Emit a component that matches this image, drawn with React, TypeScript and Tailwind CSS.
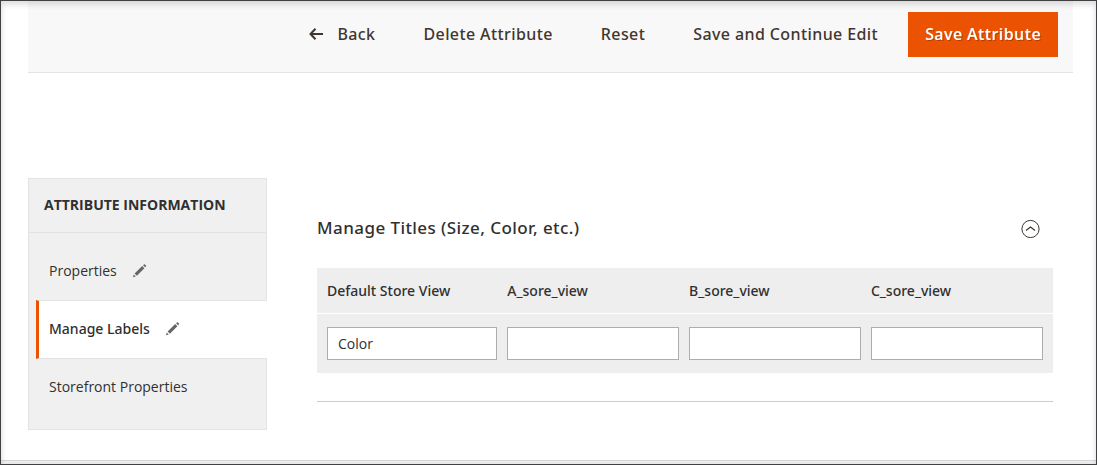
import { useState } from "react";
import clsx from "clsx";

const storeViews = [
  { id: "default", label: "Default Store View", value: "Color" },
  { id: "a", label: "A_sore_view", value: "" },
  { id: "b", label: "B_sore_view", value: "" },
  { id: "c", label: "C_sore_view", value: "" },
];

const tabs = [
  { label: "Properties", edited: true },
  { label: "Manage Labels", edited: true },
  { label: "Storefront Properties", edited: false },
];

function BackIcon() {
  return (
    <svg className="h-3 w-3.5" viewBox="0 0 14 12" fill="none" stroke="currentColor" strokeWidth="2">
      <path d="M14 6H1.5M6.5 0.8L1.5 6l5 5.2" />
    </svg>
  );
}

function PencilIcon() {
  return (
    <svg className="h-3.5 w-3.5 text-[#666]" viewBox="0 0 14 14" fill="currentColor">
      <path d="M0 13.2l.8-2.8 2 2zM1.6 9.5l7.6-7.4 2.2 2.2L3.9 11.7zM10 1.3l1-.9c.3-.3.6-.3.9 0l1.1 1c.3.3.3.6 0 .9l-.9 1z" />
    </svg>
  );
}

function CollapseIcon() {
  return (
    <svg className="h-5 w-5" viewBox="0 0 20 20" fill="none" stroke="#41362f">
      <circle cx="9.5" cy="11" r="8.6" strokeWidth="1" />
      <path d="M5 12.5L9.5 9l4.5 3.5" strokeWidth="1.2" />
    </svg>
  );
}

function PageActions() {
  return (
    <header className="mr-[23px] ml-[27px] flex items-start justify-end border-b border-[#e3e3e3] bg-[#f8f8f8] pt-[11px] pr-[15px] pb-[15px] text-base tracking-wide text-[#41362f]">
      <div className="flex h-[45px] items-center gap-12 pb-0.5 font-['Noto_Sans',sans-serif] font-medium">
        <button type="button" className="flex items-center gap-3.5">
          <BackIcon />
          Back
        </button>
        <button type="button">Delete Attribute</button>
        <button type="button">Reset</button>
        <button type="button">Save and Continue Edit</button>
      </div>
      <button
        type="button"
        className="ml-[30px] h-[45px] bg-[#eb5202] px-[17px] pb-0.5 font-semibold text-white text-shadow-[1px_1px_0_rgba(0,0,0,0.25)]"
      >
        Save Attribute
      </button>
    </header>
  );
}

function Sidebar() {
  const [active, setActive] = useState("Manage Labels");

  return (
    <nav className="w-[239px] shrink-0">
      <h2 className="border border-[#e3e3e3] bg-[#f0f0f0] pt-[15px] pb-[17px] pl-[15px] text-sm leading-[21px] font-bold text-[#303030] uppercase">
        Attribute Information
      </h2>
      <ul className="border-b border-l border-[#e3e3e3] bg-[#f0f0f0] text-sm text-[#303030]">
        {tabs.map((tab, i) => (
          <li
            key={tab.label}
            className={clsx(
              i === 0 && "pt-2.5",
              i === tabs.length - 1 && "pb-3.5",
              tab.label !== active && "border-r border-[#e3e3e3]",
            )}
          >
            <a
              href="#"
              onClick={(e) => {
                e.preventDefault();
                setActive(tab.label);
              }}
              className={clsx(
                "ml-[7px] flex items-center gap-4 border-l-3 pl-2.5",
                tab.label === active
                  ? "h-[59px] border-y border-y-[#e3e3e3] border-l-[#eb5202] bg-white pb-0.5 font-['Noto_Sans',sans-serif] font-medium"
                  : "h-14 border-l-transparent",
                i === 0 && "mb-px",
              )}
            >
              {tab.label}
              {tab.edited && <PencilIcon />}
            </a>
          </li>
        ))}
      </ul>
    </nav>
  );
}

function ManageTitles() {
  const [open, setOpen] = useState(true);

  return (
    <section className="mt-[38px] min-w-0 flex-1 border-b border-[#ccc] pb-7 text-[#303030]">
      <button
        type="button"
        aria-expanded={open}
        onClick={() => setOpen(!open)}
        className="flex w-full items-center justify-between pr-3 text-left font-['Noto_Sans',sans-serif] text-[17px] leading-6 font-medium tracking-wide"
      >
        Manage Titles (Size, Color, etc.)
        <CollapseIcon />
      </button>
      {open && (
        <table className="mt-7 w-full table-fixed border-collapse bg-[#eee] text-sm">
          <thead>
            <tr className="border-b border-white">
              {storeViews.map((view) => (
                <th
                  key={view.id}
                  className="h-[45px] w-[24.7%] pt-0.5 pl-2.5 text-left font-['Noto_Sans',sans-serif] font-medium first:w-[24.5%] last:w-[26.1%]"
                >
                  <label htmlFor={`title-${view.id}`}>{view.label}</label>
                </th>
              ))}
            </tr>
          </thead>
          <tbody>
            <tr>
              {storeViews.map((view) => (
                <td key={view.id} className="py-[13px] pl-2.5 last:pr-2.5">
                  <input
                    id={`title-${view.id}`}
                    type="text"
                    defaultValue={view.value}
                    className="block h-[33px] w-full border border-[#adadad] bg-white px-2.5 outline-none focus:border-[#007bdb]"
                  />
                </td>
              ))}
            </tr>
          </tbody>
        </table>
      )}
    </section>
  );
}

export default function App() {
  return (
    <div className="relative flex min-h-screen flex-col border border-[#414042] bg-white font-['Open_Sans',sans-serif]">
      <PageActions />
      <main className="mt-[105px] mr-[43px] mb-[30px] ml-[27px] flex flex-1 items-start gap-[50px]">
        <Sidebar />
        <ManageTitles />
      </main>
      <footer className="h-1 border-t border-[#d9d9d9] bg-[#f3f3f5]" />
      <div className="pointer-events-none absolute inset-0 shadow-[inset_0_5px_4px_rgba(65,64,66,0.1),inset_0_0_6px_rgba(65,64,66,0.12)]" />
    </div>
  );
}
